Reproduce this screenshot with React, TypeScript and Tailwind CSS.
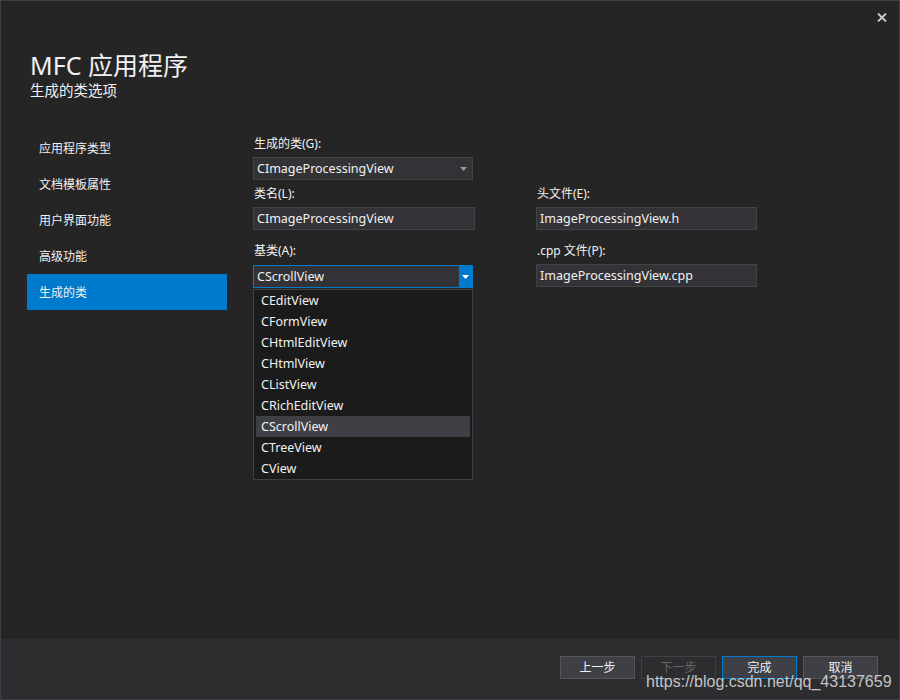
import React from "react";

const font = { fontFamily: '"Noto Sans", "Noto Sans CJK SC", sans-serif' };

const navItems = ["应用程序类型", "文档模板属性", "用户界面功能", "高级功能", "生成的类"];
const baseClasses = [
    "CEditView",
    "CFormView",
    "CHtmlEditView",
    "CHtmlView",
    "CListView",
    "CRichEditView",
    "CScrollView",
    "CTreeView",
    "CView",
];

function Caret() {
    return (
        <svg width="7" height="4" viewBox="0 0 7 4" className="block">
            <path d="M0 0H7L3.5 4Z" fill="currentColor" />
        </svg>
    );
}

function Label({ children, className = "" }: { children: React.ReactNode; className?: string }) {
    return <div className={`h-[18px] text-[12px] leading-[18px] text-[#f1f1f1] ${className}`}>{children}</div>;
}

function TextBox({ value, className = "" }: { value: string; className?: string }) {
    return (
        <div className={`flex h-[23px] items-center border border-[#434346] bg-[#333337] px-[3px] text-[12.5px] text-[#f1f1f1] ${className}`}>
            {value}
        </div>
    );
}

function Button({ label, variant = "normal" }: { label: string; variant?: "normal" | "disabled" | "default" }) {
    const styles =
        variant === "disabled"
            ? "border-[#3f3f46] bg-[#2d2d30] text-[#656565]"
            : variant === "default"
              ? "border-[#007acc] bg-[#3f3f46] text-[#f1f1f1]"
              : "border-[#555558] bg-[#3f3f46] text-[#f1f1f1]";
    return (
        <div className={`flex h-[23px] w-[75px] items-center justify-center border text-[12px] ${styles}`}>{label}</div>
    );
}

export default function App() {
    return (
        <div style={font} className="relative flex h-[700px] w-[900px] flex-col border border-[#3f3f46] bg-[#252526] text-[#f1f1f1]">
            {/* Close */}
            <div className="flex h-[33px] items-center justify-end pr-[12px]">
                <svg width="10" height="9" viewBox="0 0 10 9" className="text-[#cfcfcf]">
                    <path d="M1 0.5L9 8.5M9 0.5L1 8.5" stroke="currentColor" strokeWidth="1.8" />
                </svg>
            </div>

            {/* Header */}
            <div className="pl-[29px] pt-[15px]">
                <div className="text-[25px] leading-[32px]">MFC 应用程序</div>
                <div className="text-[14.5px] leading-[18px]">生成的类选项</div>
            </div>

            {/* Body */}
            <div className="flex flex-1 pt-[31px]">
                <div className="ml-[26px] w-[200px]">
                    {navItems.map((item, i) => (
                        <div
                            key={item}
                            className={`flex h-[36px] items-center pl-[12px] pt-[1px] text-[12px] ${i === navItems.length - 1 ? "bg-[#007acc]" : ""}`}
                        >
                            {item}
                        </div>
                    ))}
                </div>

                <div className="ml-[26px] grid grid-cols-[222px_221px] gap-x-[61px] pt-[4px] content-start">
                    {/* Row 1 */}
                    <div>
                        <Label className="pl-[1px] pt-[1px]">生成的类(G):</Label>
                        <div className="mt-[5px] flex h-[23px] w-[220px] items-center justify-between border border-[#434346] bg-[#333337] pl-[3px] pr-[5px] pt-[1px] text-[12.5px]">
                            <span>CImageProcessingView</span>
                            <span className="text-[#999999]">
                                <Caret />
                            </span>
                        </div>
                    </div>
                    <div />

                    {/* Row 2 */}
                    <div className="mt-[4px]">
                        <Label className="pl-[1px] pt-[1px]">类名(L):</Label>
                        <TextBox value="CImageProcessingView" className="mt-[5px] pt-[1px]" />
                    </div>
                    <div className="mt-[4px]">
                        <Label className="pl-[1px] pt-[1px]">头文件(E):</Label>
                        <TextBox value="ImageProcessingView.h" className="mt-[5px] pt-[1px]" />
                    </div>

                    {/* Row 3 */}
                    <div className="relative mt-[11px]">
                        <Label className="pl-[1px] pt-[1px]">基类(A):</Label>
                        <div className="mt-[6px] flex h-[23px] w-[220px] items-stretch border border-[#007acc] bg-[#333337] text-[12.5px]">
                            <div className="flex flex-1 items-center pl-[3px] pt-[1px]">CScrollView</div>
                            <div className="flex w-[13px] items-center justify-center bg-[#007acc] text-white">
                                <Caret />
                            </div>
                        </div>
                        {/* Open list */}
                        <div className="absolute left-0 top-[48px] z-10 w-[220px] border border-[#3f3f46] bg-[#1b1b1c] px-[2px]">
                            {baseClasses.map((c) => (
                                <div
                                    key={c}
                                    className={`flex h-[21px] items-center pl-[5px] pt-[1px] text-[12.5px] ${c === "CScrollView" ? "bg-[#3f3f46]" : ""}`}
                                >
                                    {c}
                                </div>
                            ))}
                        </div>
                    </div>
                    <div className="mt-[11px]">
                        <Label className="pl-[1px] pt-[1px]">.cpp 文件(P):</Label>
                        <TextBox value="ImageProcessingView.cpp" className="mt-[5px] pt-[1px]" />
                    </div>
                </div>
            </div>

            {/* Footer */}
            <div className="flex h-[60px] items-start justify-end gap-[6px] bg-[#2d2d30] pr-[21px] pt-[17px]">
                <Button label="上一步" />
                <Button label="下一步" variant="disabled" />
                <Button label="完成" variant="default" />
                <Button label="取消" />
            </div>

            {/* Watermark */}
            <div
                style={{ fontFamily: '"Liberation Sans", Arial, sans-serif' }}
                className="absolute bottom-[7px] left-[645px] text-[16px] leading-[20px] text-[rgba(255,255,255,0.72)]"
            >
                https://blog.csdn.net/qq_43137659
            </div>
        </div>
    );
}
